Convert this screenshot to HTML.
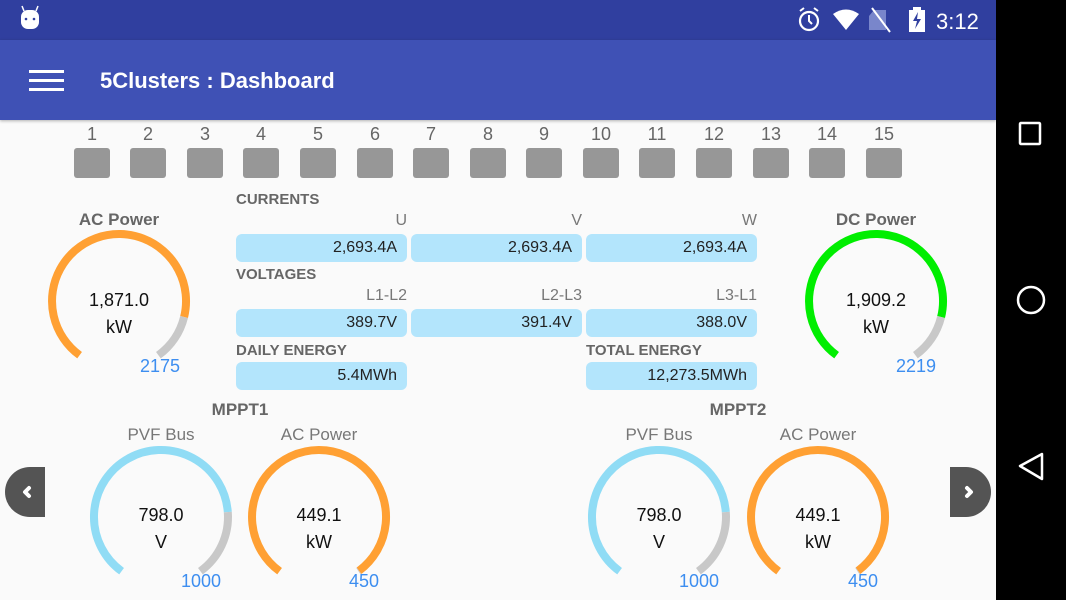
<!DOCTYPE html>
<html><head><meta charset="utf-8"><style>
*{margin:0;padding:0;box-sizing:border-box}
body{width:1066px;height:600px;overflow:hidden;background:#fafafa;font-family:"Liberation Sans",sans-serif;position:relative}
.abs{position:absolute}
.sb{left:0;top:0;width:996px;height:40px;background:#303f9f}
.tb{left:0;top:40px;width:996px;height:80px;background:#3f51b5;box-shadow:0 1px 3px rgba(0,0,0,.3)}
.nav{left:996px;top:0;width:70px;height:600px;background:#000}
.num{width:40px;text-align:center;color:#666;font-size:18px;top:124px}
.sq{width:36px;height:30px;top:148px;background:#979797;border-radius:3px}
.lbl{font-weight:bold;color:#666;font-size:15px}
.col{font-size:16px;color:#777;text-align:right;width:171px}
.box{width:171px;height:28px;background:#b3e5fc;border-radius:6px;text-align:right;padding-right:10px;font-size:16px;line-height:28px;color:#222}
</style></head><body>
<div class="abs sb"></div>
<div class="abs tb"></div>
<div class="abs nav"></div>
<svg class="abs" style="left:0;top:0" width="996" height="40">
<rect x="21" y="10" width="18" height="19" rx="7" fill="#fff"/><line x1="24" y1="11" x2="22" y2="6" stroke="#fff" stroke-width="1.5"/><line x1="36" y1="11" x2="38" y2="6" stroke="#fff" stroke-width="1.5"/>
<circle cx="26" cy="19" r="1.3" fill="#303f9f"/><circle cx="34" cy="19" r="1.3" fill="#303f9f"/>
<circle cx="809" cy="21" r="9" fill="none" stroke="#fff" stroke-width="2.2"/><path d="M809 15v6l3 3" stroke="#fff" stroke-width="2" fill="none"/>
<path d="M800 11l4-3M818 11l-4-3" stroke="#fff" stroke-width="2"/>
<path d="M833 14 Q846 5 859 14 L846 30Z" fill="#fff"/>
<path d="M874 10h12v20h-17v-14z" fill="#7986cb"/><line x1="872" y1="8" x2="890" y2="32" stroke="#fff" stroke-width="2"/>
<rect x="909" y="10" width="16" height="22" fill="#fff"/><rect x="913" y="7" width="8" height="3" fill="#fff"/><path d="M918 12l-5 9h4l-2 8 6-10h-4z" fill="#303f9f"/>
<text x="936" y="29" fill="#fff" font-size="22" font-family="Liberation Sans">3:12</text>
</svg>
<svg class="abs" style="left:29px;top:70px" width="36" height="22"><rect y="0" width="35" height="3" fill="#fff"/><rect y="9" width="35" height="3" fill="#fff"/><rect y="18" width="35" height="3" fill="#fff"/></svg>
<div class="abs" style="left:100px;top:68px;color:#fff;font-size:22px;font-weight:bold">5Clusters : Dashboard</div>
<svg class="abs" style="left:996px;top:0" width="70" height="600">
<rect x="24" y="123" width="20" height="21" fill="none" stroke="#fff" stroke-width="2.5" rx="1"/>
<circle cx="35" cy="300" r="13" fill="none" stroke="#fff" stroke-width="2.5"/>
<path d="M46 454 L24 466 L46 479Z" fill="none" stroke="#fff" stroke-width="2.5" stroke-linejoin="round"/>
</svg>
<div class="abs num" style="left:72px">1</div><div class="abs sq" style="left:74px"></div>
<div class="abs num" style="left:128px">2</div><div class="abs sq" style="left:130px"></div>
<div class="abs num" style="left:185px">3</div><div class="abs sq" style="left:187px"></div>
<div class="abs num" style="left:241px">4</div><div class="abs sq" style="left:243px"></div>
<div class="abs num" style="left:298px">5</div><div class="abs sq" style="left:300px"></div>
<div class="abs num" style="left:355px">6</div><div class="abs sq" style="left:357px"></div>
<div class="abs num" style="left:411px">7</div><div class="abs sq" style="left:413px"></div>
<div class="abs num" style="left:468px">8</div><div class="abs sq" style="left:470px"></div>
<div class="abs num" style="left:524px">9</div><div class="abs sq" style="left:526px"></div>
<div class="abs num" style="left:581px">10</div><div class="abs sq" style="left:583px"></div>
<div class="abs num" style="left:637px">11</div><div class="abs sq" style="left:639px"></div>
<div class="abs num" style="left:694px">12</div><div class="abs sq" style="left:696px"></div>
<div class="abs num" style="left:751px">13</div><div class="abs sq" style="left:753px"></div>
<div class="abs num" style="left:807px">14</div><div class="abs sq" style="left:809px"></div>
<div class="abs num" style="left:864px">15</div><div class="abs sq" style="left:866px"></div>
<div class="abs lbl" style="left:236px;top:191px">CURRENTS</div>
<div class="abs col" style="left:236px;top:212px">U</div>
<div class="abs col" style="left:411px;top:212px">V</div>
<div class="abs col" style="left:586px;top:212px">W</div>
<div class="abs box" style="left:236px;top:234px">2,693.4A</div>
<div class="abs box" style="left:411px;top:234px">2,693.4A</div>
<div class="abs box" style="left:586px;top:234px">2,693.4A</div>
<div class="abs lbl" style="left:236px;top:266px">VOLTAGES</div>
<div class="abs col" style="left:236px;top:287px">L1-L2</div>
<div class="abs col" style="left:411px;top:287px">L2-L3</div>
<div class="abs col" style="left:586px;top:287px">L3-L1</div>
<div class="abs box" style="left:236px;top:309px">389.7V</div>
<div class="abs box" style="left:411px;top:309px">391.4V</div>
<div class="abs box" style="left:586px;top:309px">388.0V</div>
<div class="abs lbl" style="left:236px;top:342px">DAILY ENERGY</div>
<div class="abs lbl" style="left:586px;top:342px">TOTAL ENERGY</div>
<div class="abs box" style="left:236px;top:362px">5.4MWh</div>
<div class="abs box" style="left:586px;top:362px">12,273.5MWh</div>
<svg class="abs" style="left:0;top:0" width="996" height="600" font-family="Liberation Sans">
<g fill="none" stroke-width="8">
<path d="M79.6 355.2 A67 67 0 1 1 184.1 317" stroke="#ffa033"/>
<path d="M184.1 317 A67 67 0 0 1 158.4 355.2" stroke="#c8c8c8"/>
<path d="M836.6 355.2 A67 67 0 1 1 941.1 317" stroke="#00ee00"/>
<path d="M941.1 317 A67 67 0 0 1 915.4 355.2" stroke="#c8c8c8"/>
<path d="M121.6 571.2 A67 67 0 1 1 227.8 512.1" stroke="#90dcf5"/>
<path d="M227.8 512.1 A67 67 0 0 1 200.4 571.2" stroke="#c8c8c8"/>
<path d="M279.6 571.2 A67 67 0 1 1 359 570.8" stroke="#ffa033"/>
<path d="M359 570.8 A67 67 0 0 1 358.4 571.2" stroke="#c8c8c8"/>
<path d="M619.6 571.2 A67 67 0 1 1 725.8 512.1" stroke="#90dcf5"/>
<path d="M725.8 512.1 A67 67 0 0 1 698.4 571.2" stroke="#c8c8c8"/>
<path d="M778.6 571.2 A67 67 0 1 1 858 570.8" stroke="#ffa033"/>
<path d="M858 570.8 A67 67 0 0 1 857.4 571.2" stroke="#c8c8c8"/>
</g>
<g text-anchor="middle" font-size="18" fill="#111">
<text x="119" y="306">1,871.0</text><text x="119" y="333">kW</text>
<text x="876" y="306">1,909.2</text><text x="876" y="333">kW</text>
<text x="161" y="521">798.0</text><text x="161" y="548">V</text>
<text x="319" y="521">449.1</text><text x="319" y="548">kW</text>
<text x="659" y="521">798.0</text><text x="659" y="548">V</text>
<text x="818" y="521">449.1</text><text x="818" y="548">kW</text>
</g>
<g font-size="18" fill="#3d8ef0">
<text x="140" y="372">2175</text><text x="896" y="372">2219</text>
<text x="181" y="587">1000</text><text x="349" y="587">450</text>
<text x="679" y="587">1000</text><text x="848" y="587">450</text>
</g>
<g text-anchor="middle" font-weight="bold" font-size="17" fill="#666">
<text x="119" y="225">AC Power</text><text x="876" y="225">DC Power</text>
<text x="240" y="415">MPPT1</text><text x="738" y="415">MPPT2</text>
</g>
<g text-anchor="middle" font-size="17" fill="#777">
<text x="161" y="440">PVF Bus</text><text x="319" y="440">AC Power</text>
<text x="659" y="440">PVF Bus</text><text x="818" y="440">AC Power</text>
</g>
<path d="M45 467 V517 H30 A25 25 0 0 1 30 467Z" fill="#545454"/>
<path d="M29 488 L25 492 L29 496" stroke="#fff" stroke-width="4" fill="none" stroke-linecap="round" stroke-linejoin="round"/>
<path d="M950 467 V517 H966 A25 25 0 0 0 966 467Z" fill="#545454"/>
<path d="M967 488 L971 492 L967 496" stroke="#fff" stroke-width="4" fill="none" stroke-linecap="round" stroke-linejoin="round"/>
</svg>
</body></html>
